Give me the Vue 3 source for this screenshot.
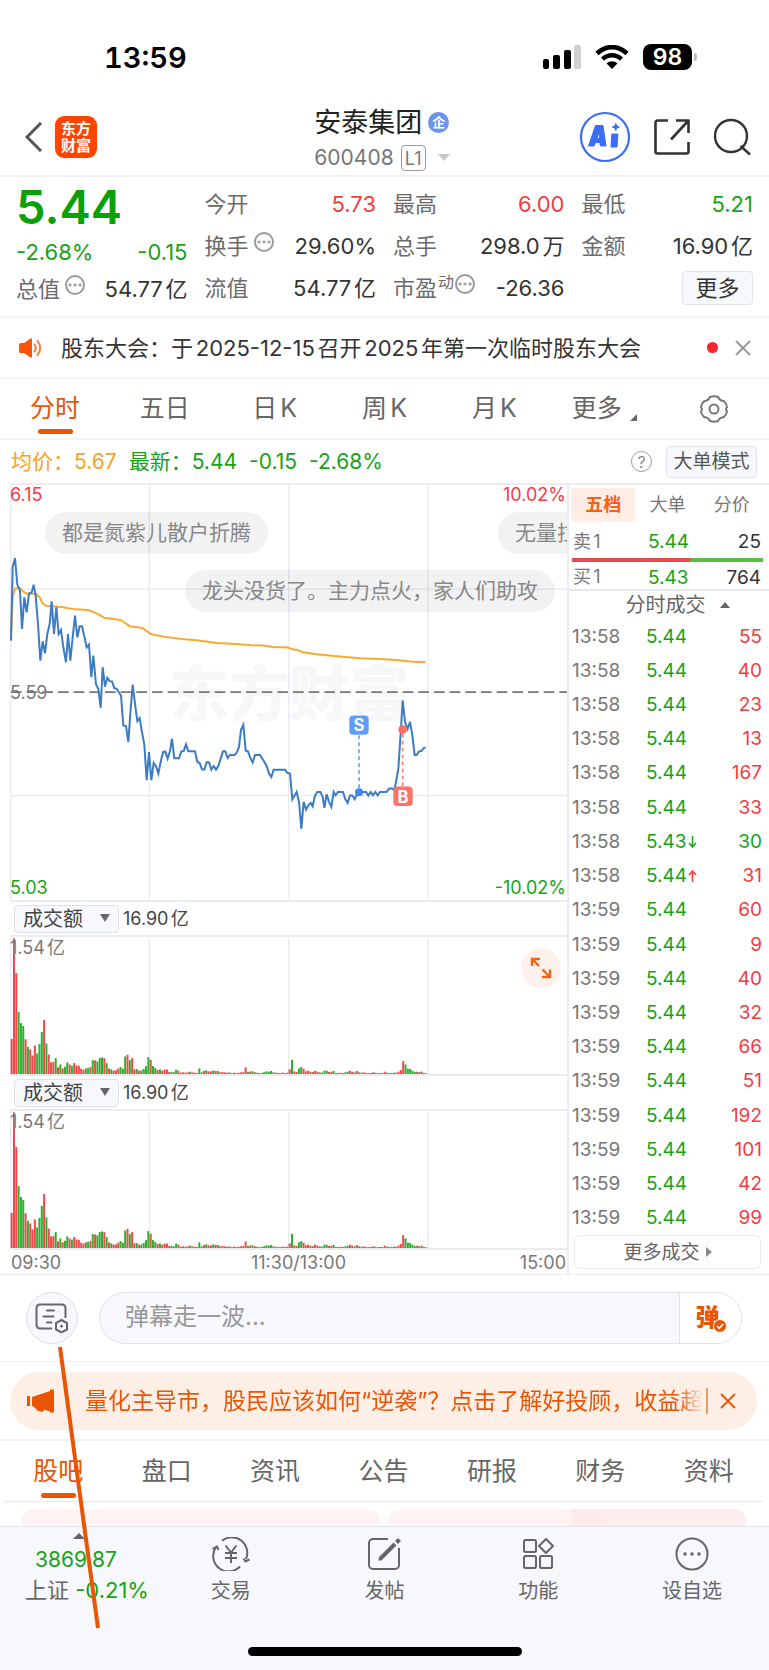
<script setup>
import { ref } from 'vue'

const period = ref('分时')
const periods = ['分时', '五日', '日K', '周K', '月K', '更多']
const depth = ref('五档')
const depths = ['五档', '大单', '分价']
const section = ref('股吧')
const sections = ['股吧', '盘口', '资讯', '公告', '研报', '财务', '资料']

const trades = [
  ['13:58', '5.44', '', 55],
  ['13:58', '5.44', '', 40],
  ['13:58', '5.44', '', 23],
  ['13:58', '5.44', '', 13],
  ['13:58', '5.44', '', 167],
  ['13:58', '5.44', '', 33],
  ['13:58', '5.43', 'down', 30],
  ['13:58', '5.44', 'up', 31],
  ['13:59', '5.44', '', 60],
  ['13:59', '5.44', '', 9],
  ['13:59', '5.44', '', 40],
  ['13:59', '5.44', '', 32],
  ['13:59', '5.44', '', 66],
  ['13:59', '5.44', '', 51],
  ['13:59', '5.44', '', 192],
  ['13:59', '5.44', '', 101],
  ['13:59', '5.44', '', 42],
  ['13:59', '5.44', '', 99],
]

const pricePoints =
  '33,480 38,258 45,232 52,312 60,330 66,445 73,350 80,395 87,338 95,335 101,312 107,345 114,430 121,540 128,482 135,518 142,460 149,430 155,362 162,460 169,380 176,460 183,448 190,500 198,545 204,460 211,540 218,470 225,405 232,470 239,437 246,437 253,468 260,500 267,492 274,590 280,525 288,612 295,625 302,682 308,560 315,618 322,592 329,602 336,603 343,623 350,625 357,636 363,645 370,735 378,737 385,785 391,700 398,612 405,670 412,722 419,713 426,755 433,793 440,900 447,815 454,900 461,848 468,858 475,880 482,845 489,815 496,813 503,835 510,812 516,775 523,834 537,834 544,813 551,812 558,792 565,813 585,813 592,845 599,848 606,867 613,868 620,846 627,846 634,868 641,857 648,868 655,857 662,835 669,813 676,813 683,833 690,824 704,824 711,815 717,800 723,748 730,733 737,811 744,813 751,833 758,846 765,824 780,824 790,840 800,857 807,880 814,890 821,868 855,868 862,878 870,880 877,957 890,935 897,965 904,1046 911,965 918,988 925,975 932,968 938,978 945,946 952,935 961,935 968,950 973,983 980,942 987,965 994,980 1001,935 1007,945 1014,935 1029,935 1036,957 1043,968 1050,946 1057,946 1064,957 1071,942 1078,935 1098,935 1105,946 1112,935 1119,945 1126,935 1133,945 1140,935 1160,935 1167,925 1176,924 1183,930 1188,905 1195,865 1202,760 1208,660 1215,725 1223,745 1230,724 1237,765 1244,824 1250,824 1257,813 1264,812 1272,802 1277,802'
const averagePoints =
  '33,470 38,350 45,323 60,322 70,333 80,338 108,340 118,348 128,368 138,375 185,379 225,386 265,388 290,398 312,411 362,418 390,437 428,442 452,460 490,468 545,475 590,479 650,487 710,490 755,494 790,495 820,499 865,501 880,507 892,508 908,515 950,521 1010,527 1080,533 1140,535 1190,538 1230,543 1277,545'

const volume =
  'r106 r410 r305 g187 g154 g145 r105 g82 r74 r56 r86 g62 g91 g127 r163 g92 r59 r35 r36 g48 r20 g29 r17 g22 g35 r29 g25 r33 r26 r25 r16 r13 g17 g18 r21 g42 r41 g38 g48 g50 r48 g33 r17 g14 r10 r11 r16 g21 g16 g53 r58 g42 r48 r14 g15 r10 g11 g15 g24 g51 r43 g24 g18 r12 g14 r10 r13 r14 r6 g6 g5 g13 r10 r4 r5 r4 r5 g7 r5 r4 r3 g17 g5 r9 g11 r8 r8 g11 r9 g9 r5 r6 r5 r4 g5 r3 r4 r3 r4 r5 r6 r20 g6 r8 g8 r5 g4 r3 r3 g6 g8 g7 g9 g5 r4 r3 r3 r4 r3 r4 r14 g43 r8 r6 g17 g21 r16 r8 r10 g7 r6 r10 r7 g5 g4 g10 g10 r6 r7 g9 r3 r3 r4 r3 g5 g7 r10 r7 g5 r9 g5 r4 r5 g3 r3 g3 r5 g4 r3 g3 r3 r7 g4 r3 r3 g4 r4 r7 r12 r39 g29 g16 g15 g10 g6 r7 g6 r7 r3 r2'
const bars = volume.split(' ').map((token, i) => {
  const h = Number(token.slice(1))
  return { x: 32 + i * 6.95, y: 521 - h, h, rise: token[0] === 'r' }
})
const panes = ['first', 'second']
</script>

<template>
  <div class="page">
    <div class="status">
      <span class="clock">13:59</span>
      <div class="signals">
        <svg class="cell" viewBox="0 0 38 24" aria-hidden="true">
          <rect x="0" y="14" width="6" height="10" rx="2" />
          <rect x="10" y="10" width="7" height="14" rx="2" />
          <rect x="21" y="5" width="7" height="19" rx="2" />
          <rect x="31" y="0" width="7" height="24" rx="2" fill="#cfcfcf" />
        </svg>
        <svg class="wifi" viewBox="0 0 34 24" aria-hidden="true">
          <path d="M2 8.500C10.500 0 23.500 0 32 8.500" fill="none" stroke="#000" stroke-width="4.600" />
          <path d="M7.500 14.200C13 9 21 9 26.500 14.200" fill="none" stroke="#000" stroke-width="4.400" />
          <path d="M17 24l-5.400-5.600c3-2.800 7.800-2.800 10.800 0z" />
        </svg>
        <span class="battery">98</span>
      </div>
    </div>

    <header class="header">
      <div class="side">
        <button class="plain back" aria-label="返回">
          <svg width="18" height="30" viewBox="0 0 18 30"><path d="M16 1L2 15l14 14" fill="none" stroke="#555" stroke-width="3" /></svg>
        </button>
        <a class="logo" href="#"><span>东方</span><span>财富</span></a>
      </div>
      <div class="title">
        <h1>安泰集团<span class="corp">企</span></h1>
        <button class="code plain">600408<span class="level">L1</span><i class="tri-down pale"></i></button>
      </div>
      <div class="side tools">
        <button class="plain" aria-label="Ai">
          <svg width="52" height="52" viewBox="0 0 52 52">
            <circle cx="26" cy="26" r="24" fill="#fff" stroke="#3a6cf8" stroke-width="2.200" />
            <path d="M9.500 35L16.500 14.500h7.500L27 35h-5.500l-.5-3.500h-4.500L15 35zM17.800 27.500h2.800l-.4-6.500z" fill="#3a6cf8" fill-rule="evenodd" stroke="#3a6cf8" stroke-width="1" stroke-linejoin="round" />
            <path d="M32.800 23h6l-.8 13h-6zM36.800 12.500l1 2.500 2.500 1-2.500 1-1 2.500-1-2.500-2.500-1 2.500-1z" fill="#3a6cf8" stroke="#3a6cf8" stroke-width="1" stroke-linejoin="round" />
          </svg>
        </button>
        <button class="plain" aria-label="分享">
          <svg width="38" height="38" viewBox="0 0 38 38" fill="none" stroke="#333" stroke-width="2.600" stroke-linejoin="round">
            <path d="M15 2.500H4.500a2 2 0 0 0-2 2v29a2 2 0 0 0 2 2h29a2 2 0 0 0 2-2V24M23 2.500h12.500V15M35.500 2.500L18 21.500" />
          </svg>
        </button>
        <button class="plain" aria-label="搜索">
          <svg width="38" height="38" viewBox="0 0 38 38" fill="none" stroke="#333" stroke-width="2.400">
            <circle cx="18" cy="18" r="16" /><path d="M27.500 28L37 36.500" />
          </svg>
        </button>
      </div>
    </header>

    <section class="quote">
      <div class="col lead">
        <strong class="last green">5.44</strong>
        <div class="row green"><span>-2.68%</span><span>-0.15</span></div>
        <div class="row"><span class="label">总值<i class="more-dot"></i></span><span>54.77亿</span></div>
      </div>
      <div class="col">
        <div class="row"><span class="label">今开</span><span class="red">5.73</span></div>
        <div class="row"><span class="label">换手<i class="more-dot"></i></span><span>29.60%</span></div>
        <div class="row"><span class="label">流值</span><span>54.77亿</span></div>
      </div>
      <div class="col">
        <div class="row"><span class="label">最高</span><span class="red">6.00</span></div>
        <div class="row"><span class="label">总手</span><span>298.0万</span></div>
        <div class="row"><span class="label">市盈<sup>动</sup><i class="more-dot tight"></i></span><span>-26.36</span></div>
      </div>
      <div class="col">
        <div class="row"><span class="label">最低</span><span class="green">5.21</span></div>
        <div class="row"><span class="label">金额</span><span>16.90亿</span></div>
        <div class="row end"><button class="box more">更多</button></div>
      </div>
    </section>

    <section class="notice">
      <svg width="24" height="20" viewBox="0 0 24 20" aria-hidden="true">
        <path d="M0 6.500Q0 5 1.500 5H5l6.500-4.600Q13 0 13 1.500v17q0 1.500-1.500 1.100L5 15H1.500Q0 15 0 13.500z" fill="#ff5406" />
        <path d="M15.500 6.500q2.500 3.500 0 7M18.500 3q5.500 7 0 14" fill="none" stroke="#ff7a3c" stroke-width="2" stroke-linecap="round" />
      </svg>
      <a class="notice-text" href="#">股东大会：于2025-12-15召开2025年第一次临时股东大会</a>
      <span class="dot"></span>
      <button class="plain" aria-label="关闭">
        <svg width="16" height="16" viewBox="0 0 16 16"><path d="M1 1l14 14M15 1L1 15" stroke="#999" stroke-width="2" /></svg>
      </button>
    </section>

    <nav class="tabs periods">
      <button v-for="p in periods" :key="p" class="tab" :class="{ active: p === period }" @click="period = p">
        {{ p }}<i v-if="p === '更多'" class="corner"></i>
      </button>
      <button class="tab" aria-label="设置">
        <svg width="28" height="28" viewBox="0 0 28 28" fill="none" stroke="#777" stroke-width="2">
          <path d="M10 2Q14 0.500 18 2Q19.500 5.500 24 6.200Q27 9.500 27 12.500Q24.800 14 27 16Q27 19 24 22Q19.500 22.500 18 26Q14 27.500 10 26Q8.500 22.500 4 22Q1 19 1 16Q3.200 14 1 12.500Q1 9.500 4 6.200Q8.500 5.500 10 2z" stroke-linejoin="round" />
          <circle cx="14" cy="14" r="4.500" />
        </svg>
      </button>
    </nav>

    <div class="info">
      <span class="amber">均价：5.67</span>
      <span class="green latest">最新：5.44</span>
      <span class="green">-0.15</span>
      <span class="green">-2.68%</span>
      <button class="help" aria-label="帮助">?</button>
      <button class="box mode">大单模式</button>
    </div>

    <main class="board">
      <div class="charts">
        <div class="chart">
          <span class="watermark">东方财富</span>
          <svg class="plot" viewBox="30 12 1671 1248" preserveAspectRatio="none" aria-label="分时走势">
            <g stroke="#e9eaf2" stroke-width="4">
              <path d="M32 12V1260M448 12V1256M866 12V1256M1284 12V1256M32 325H1701M32 946H1701" />
            </g>
            <path d="M33 635H1701" stroke="#777" stroke-width="5" stroke-dasharray="32 15" />
            <polyline :points="averagePoints" fill="none" stroke="#fba92c" stroke-width="6" stroke-linejoin="round" />
            <polyline :points="pricePoints" fill="none" stroke="#3b7cc4" stroke-width="6" />
            <path d="M1077 765V925" stroke="#64a2fb" stroke-width="5" stroke-dasharray="11 10" />
            <path d="M1208 760V920" stroke="#fa7d6e" stroke-width="5" stroke-dasharray="11 10" />
            <circle cx="1077" cy="936" r="12" fill="#4186f5" />
            <circle cx="1208" cy="747" r="13" fill="#fa6f62" />
            <rect x="1048" y="705" width="58" height="58" rx="12" fill="#5e9dfb" />
            <rect x="1180" y="919" width="58" height="58" rx="12" fill="#fb7466" />
            <text x="1077" y="753" class="mark">S</text>
            <text x="1209" y="967" class="mark">B</text>
          </svg>
          <span class="scale top left red">6.15</span>
          <span class="scale top right red">10.02%</span>
          <span class="scale middle left">5.59</span>
          <span class="scale bottom left green">5.03</span>
          <span class="scale bottom right green">-10.02%</span>
          <span class="bubble first">都是氮紫儿散户折腾</span>
          <span class="bubble second">龙头没货了。主力点火，家人们助攻</span>
          <span class="bubble third">无量拉升</span>
        </div>
        <template v-for="pane in panes" :key="pane">
          <div class="metric">
            <label class="picker">
              <select :aria-label="'指标 ' + pane"><option>成交额</option></select>
              <i class="tri-down"></i>
            </label>
            <span>16.90亿</span>
          </div>
          <div class="chart volume">
            <svg class="plot" viewBox="30 107 1671 414" preserveAspectRatio="none" aria-label="成交额">
              <path d="M32 107V521M448 112V521M866 112V521M1284 112V521" stroke="#e9eaf2" stroke-width="4" />
              <rect
                v-for="(b, i) in bars"
                :key="i"
                :x="b.x"
                :y="b.y"
                width="6"
                :height="b.h"
                :fill="b.rise ? '#f2484b' : '#2fae2f'"
              />
            </svg>
            <span class="scale peak left">1.54亿</span>
            <button v-if="pane === 'first'" class="expand" aria-label="展开">
              <svg width="22" height="22" viewBox="0 0 22 22" fill="none" stroke="#f0641e" stroke-width="2.400">
                <path d="M2 9V2h8M2 2l7 7M20 12.500V20h-8M20 20l-7.500-7.500" />
              </svg>
            </button>
          </div>
        </template>
        <div class="axis"><span>09:30</span><span class="noon">11:30/13:00</span><span>15:00</span></div>
      </div>

      <aside class="book">
        <div class="depths">
          <button v-for="d in depths" :key="d" :class="{ active: d === depth }" @click="depth = d">{{ d }}</button>
        </div>
        <div class="level-row"><span>卖1</span><b class="green">5.44</b><em>25</em></div>
        <div class="ratio"></div>
        <div class="level-row buy"><span>买1</span><b class="green">5.43</b><em>764</em></div>
        <h2>分时成交<i class="tri-up"></i></h2>
        <table class="trades">
          <tbody>
            <tr v-for="(t, i) in trades" :key="i">
              <td class="time">{{ t[0] }}</td>
              <td class="green">
                {{ t[1] }}<svg v-if="t[2]" :class="t[2]" width="9" height="12" viewBox="0 0 9 12" fill="none" stroke="currentColor" stroke-width="1.500"><path d="M4.500 0v11M1 7l3.500 4L8 7" /></svg>
              </td>
              <td class="qty" :class="t[2] === 'down' ? 'green' : 'red'">{{ t[3] }}</td>
            </tr>
          </tbody>
        </table>
        <button class="all">更多成交<i class="tri-right"></i></button>
      </aside>
    </main>

    <section class="composer">
      <button class="round" aria-label="弹幕设置">
        <svg width="34" height="30" viewBox="0 0 34 30" fill="none" stroke="#666" stroke-width="2">
          <path d="M17 25.500H5a3.500 3.500 0 0 1-3.500-3.500V5A3.500 3.500 0 0 1 5 1.500h22A3.500 3.500 0 0 1 30.500 5v10" />
          <path d="M12 7.500h7M8.500 13.500h10M12 19.500h4.500" stroke-linecap="round" />
          <path d="M26.500 17l5.500 3v6.500l-5.500 3-5.500-3V20z" /><circle cx="26.500" cy="23.200" r="1" fill="#666" stroke-width="1" />
        </svg>
      </button>
      <div class="field">
        <input type="text" placeholder="弹幕走一波..." aria-label="弹幕" />
        <button class="send" aria-label="弹幕开关">
          <span class="glyph">弹
            <svg class="check" width="14" height="14" viewBox="0 0 14 14"><circle cx="7" cy="7" r="6.500" fill="#ea5504" stroke="#fff" /><path d="M4 7l2.200 2.300L10.200 5" fill="none" stroke="#fff" stroke-width="1.600" /></svg>
          </span>
        </button>
      </div>
      <svg class="pointer" width="46" height="284" viewBox="0 0 46 284" aria-hidden="true"><path d="M3 1L41 282" stroke="#ea5504" stroke-width="4" /></svg>
    </section>

    <section class="promo">
      <div class="pill">
        <svg width="28" height="24" viewBox="0 0 28 24" aria-hidden="true">
          <path d="M0 7h3v10H0zM5 8l18-6V0.500h4v23h-4v-1L17 20.500v1l-2 1.500-5-1.500-1.500-2.500L5 17z" fill="#ea5504" />
        </svg>
        <a href="#">量化主导市，股民应该如何“逆袭”？点击了解好投顾，收益超</a>
        <button class="plain" aria-label="关闭">
          <svg width="16" height="16" viewBox="0 0 16 16"><path d="M1 1l14 14M15 1L1 15" stroke="#ea5504" stroke-width="1.800" /></svg>
        </button>
      </div>
    </section>

    <nav class="tabs sections">
      <button v-for="s in sections" :key="s" class="tab" :class="{ active: s === section }" @click="section = s">{{ s }}</button>
    </nav>
    <div class="cards"><div class="card"></div><div class="card tinted"></div></div>

    <footer class="dock">
      <div class="items">
        <button class="index">
          <i class="tri-up wide"></i>
          <span class="points green">3869.87</span>
          <span class="market">上证 <b class="green">-0.21%</b></span>
        </button>
        <button class="item">
          <svg width="38" height="34" viewBox="0 0 38 34" fill="none" stroke="#666" stroke-width="2">
            <path d="M10 3.800A15.500 15.500 0 0 1 34 22M28 29.500A15.500 15.500 0 0 1 4 10" />
            <path d="M.5 12L5 9.500l1.500 3.500M31.500 21.500L33.500 24.500l4-2M13.500 8.500l5.500 7 5.500-7M19 15.500v10.500M13 16h12M13 21h12" />
          </svg>
          交易
        </button>
        <button class="item">
          <svg width="34" height="34" viewBox="0 0 34 34" fill="none" stroke="#666" stroke-width="2">
            <path d="M21 2H6a4 4 0 0 0-4 4v22a4 4 0 0 0 4 4h22a4 4 0 0 0 4-4V11" />
            <path d="M13 22L28 7" stroke-width="4" /><path d="M12 23.500l2.500-4" stroke-width="2" /><path d="M29.500 5.500l3-3" stroke-width="4" />
          </svg>
          发帖
        </button>
        <button class="item">
          <svg width="34" height="34" viewBox="0 0 34 34" fill="none" stroke="#666" stroke-width="2" stroke-linejoin="round">
            <rect x="3" y="3" width="12" height="12" rx="1.500" /><rect x="3" y="19" width="12" height="12" rx="1.500" /><rect x="19" y="19" width="12" height="12" rx="1.500" />
            <path d="M25 2l7 7-7 7-7-7z" />
          </svg>
          功能
        </button>
        <button class="item">
          <svg width="34" height="34" viewBox="0 0 34 34" fill="none" stroke="#666" stroke-width="2">
            <circle cx="17" cy="17" r="15.500" />
            <g fill="#666" stroke="none"><circle cx="10" cy="17" r="1.800" /><circle cx="17" cy="17" r="1.800" /><circle cx="24" cy="17" r="1.800" /></g>
          </svg>
          设自选
        </button>
      </div>
      <div class="home"></div>
    </footer>
  </div>
</template>

<style>
body { background: #fff; }
</style>

<style scoped>
* { box-sizing: border-box; }
.page { font-family: Inter, "Noto Sans CJK SC", sans-serif; color: #333; background: #fff; min-height: 100vh; display: flex; flex-direction: column; text-autospace: normal; line-height: 1; overflow: hidden; }
button, input, select { font: inherit; color: inherit; background: none; border: 0; padding: 0; margin: 0; text-autospace: inherit; }
a { color: inherit; text-decoration: none; }
i, em { font-style: normal; }
b { font-weight: 400; }
svg { display: block; flex: none; }
.green { color: #16a316; }
.red { color: #f53b3f; }
.amber { color: #fba024; }
.plain { display: block; }
.box { border: 1px solid #e2e4ea; border-radius: 4px; background: #f7f8fb; }

.tri-down { width: 0; height: 0; border: 5px solid transparent; border-top: 8px solid #666; border-bottom: 0; }
.tri-down.pale { border-width: 7px 6px 0; border-top-color: #c8c8c8; }
.tri-up { width: 0; height: 0; border: 5px solid transparent; border-bottom: 6px solid #666; border-top: 0; }
.tri-up.wide { border-width: 0 6px 6px; }
.tri-right { width: 0; height: 0; border: 5px solid transparent; border-left: 6px solid #888; border-right: 0; }

.status { height: 95px; padding: 19px 70px 0 104px; display: flex; align-items: center; justify-content: space-between; color: #000; }
.clock { font-size: 29px; font-weight: 600; font-variant-numeric: tabular-nums; }
.signals { display: flex; align-items: center; gap: 14px; }
.cell { width: 38px; height: 24px; }
.wifi { width: 34px; height: 24px; }
.battery { position: relative; width: 49px; height: 26px; border-radius: 8px; background: #000; color: #fff; font-size: 23px; font-weight: 600; line-height: 26px; text-align: center; margin-right: 7px; }
.battery::after { content: ""; position: absolute; right: -5px; top: 9px; width: 3px; height: 8px; border-radius: 0 3px 3px 0; background: #bbb; }

.header { height: 82px; padding: 3px 18px 0 13px; border-bottom: 2px solid #f1f1f3; display: grid; grid-template-columns: 1fr auto 1fr; align-items: center; }
.side { display: flex; align-items: center; gap: 12px; }
.back { padding-left: 12px; }
.tools { justify-content: flex-end; gap: 22px; }
.logo { width: 42px; height: 42px; border-radius: 9px; background: #ff4500; color: #fff; font-size: 15px; line-height: 17px; font-weight: 700; display: flex; flex-direction: column; align-items: center; justify-content: center; }
.title { align-self: end; }
h1 { margin: 0; height: 35px; font-size: 27px; font-weight: 400; color: #222; display: flex; align-items: center; gap: 6px; }
.corp { width: 21px; height: 21px; border-radius: 50%; background: #6a94ee; color: #fff; font-size: 13px; line-height: 20px; font-weight: 700; text-align: center; }
.code { height: 35px; font-size: 21px; color: #777; display: flex; align-items: center; }
.level { margin: 0 12px 0 7px; width: 25px; height: 26px; border: 1px solid #999; border-radius: 4px; font-size: 18px; line-height: 25px; text-align: center; }

.quote { padding: 6px 16px 7px; border-bottom: 2px solid #f5f5f7; display: grid; grid-template-columns: repeat(4, 1fr); column-gap: 17px; font-size: 22px; }
.col { display: flex; flex-direction: column; }
.row { height: 42px; display: flex; align-items: center; justify-content: space-between; white-space: nowrap; }
.row.end { justify-content: flex-end; }
.last { height: 51px; font-size: 47px; line-height: 48px; font-weight: 600; color: #0aa00a; }
.lead .row { height: 35px; }
.lead .row + .row { height: 40px; }
.label { color: #6b6b6b; display: flex; align-items: center; }
.label sup { font-size: 16px; line-height: 16px; vertical-align: baseline; align-self: flex-start; margin-left: 1px; }
.more-dot { width: 20px; height: 20px; margin: 0 0 8px 5px; border: 2px solid #999; border-radius: 50%; background: radial-gradient(circle, #999 1px, transparent 2px) 0 0 / 5px 16px repeat-x; background-position: center; }
.more-dot.tight { margin-left: 1px; }
.more { width: 71px; height: 34px; }

.notice { height: 61px; padding: 0 18px 0 19px; border-bottom: 2px solid #f5f5f7; display: flex; align-items: center; font-size: 22px; }
.notice-text { flex: 1; margin-left: 18px; white-space: nowrap; }
.dot { width: 11px; height: 11px; border-radius: 50%; background: #f5252b; margin-right: 17px; }

.tabs { display: grid; grid-template-columns: repeat(7, 1fr); height: 61px; font-size: 25px; color: #666; }
.tab { position: relative; display: flex; align-items: center; justify-content: center; }
.tab.active { color: #ea5504; }
.tab.active::after { content: ""; position: absolute; bottom: 4px; left: 50%; margin-left: -17px; width: 35px; height: 5px; border-radius: 3px; background: #ea5504; }
.periods { border-bottom: 2px solid #f5f5f7; }
.corner { align-self: flex-end; margin: 0 0 17px 8px; border-left: 7px solid transparent; border-bottom: 7px solid #666; }
.sections { border-bottom: 1px solid #e8e8ec; margin: 0 6px 0 4px; }
.sections .tab.active::after { bottom: 3px; }

.info { height: 43px; padding: 0 12px 0 11px; display: flex; align-items: center; font-size: 21px; gap: 12px; white-space: nowrap; }
.help { margin-left: auto; margin-right: 2px; width: 21px; height: 21px; border: 1px solid #999; border-radius: 50%; font-size: 16px; color: #888; }
.mode { width: 91px; height: 32px; font-size: 19px; color: #555; }

.board { display: grid; grid-template-columns: minmax(0, 1fr) 202px; border-bottom: 1px solid #ebebef; }
.charts { margin-left: 10px; border-top: 2px solid #ededf1; }
.chart { position: relative; height: 417px; overflow: hidden; border-bottom: 2px solid #ebebf0; }
.plot { position: relative; width: 100%; height: 100%; }
.chart.volume { height: 141px; border-top: 2px solid #ebebf0; }
.mark { font: 700 50px Inter, sans-serif; fill: #fff; text-anchor: middle; }
.watermark { position: absolute; left: 159px; top: 174px; font-size: 60px; line-height: 70px; font-weight: 900; color: #f7f7f8; }
.scale { position: absolute; font-size: 18px; line-height: 20px; }
.left { left: 0; }
.right { right: 1px; }
.top { top: 0; }
.middle { top: 198px; color: #777; }
.bottom { bottom: 2px; }
.peak { top: 1px; color: #777; }
.bubble { position: absolute; height: 42px; padding: 0 17px; border-radius: 21px; background: rgba(0, 0, 0, 0.05); color: #888; font-size: 21px; line-height: 41px; white-space: nowrap; }
.bubble.first { left: 35px; top: 27px; }
.bubble.second { left: 175px; top: 85px; }
.bubble.third { left: 488px; top: 27px; }
.metric { height: 33px; padding-left: 4px; display: flex; align-items: center; gap: 4px; font-size: 18px; color: #444; }
.picker { position: relative; display: flex; width: 105px; height: 28px; }
.picker select { appearance: none; width: 100%; height: 100%; padding-left: 8px; border: 1px solid #dfe1e8; border-radius: 4px; background: #f7f8fb; font-size: 20px; line-height: 24px; }
.picker i { position: absolute; right: 9px; top: 9px; pointer-events: none; }
.expand { position: absolute; right: 6px; top: 11px; width: 40px; height: 40px; border-radius: 50%; background: #fdf1eb; display: flex; align-items: center; justify-content: center; }
.axis { height: 24px; padding: 2px 1px 0; display: grid; grid-template-columns: 1fr auto 1fr; align-items: center; font-size: 18px; color: #777; }
.axis .noon { padding-left: 20px; }
.axis span:last-child { text-align: right; }

.book { border-left: 2px solid #ebecf2; border-top: 2px solid #ededf1; display: flex; flex-direction: column; font-size: 19px; }
.depths { display: grid; grid-template-columns: repeat(3, 1fr); padding: 3px 5px 0 2px; }
.depths button { height: 34px; font-size: 18px; color: #777; border-radius: 4px; }
.depths .active { background: #feede5; color: #ff5d10; font-weight: 700; }
.level-row { height: 36px; padding: 3px 8px 0 4px; display: grid; grid-template-columns: 75px 1fr auto; align-items: center; }
.level-row span { color: #777; font-size: 18px; }
.level-row.buy { height: 27px; }
.ratio { height: 4px; margin: 0 6px 0 3px; background: linear-gradient(135deg, #e84a4d 0 62%, #5cba47 62%); }
h2 { margin: 0; height: 30px; border-top: 2px solid #e6e7ef; font-size: 20px; font-weight: 400; color: #666; display: flex; align-items: center; justify-content: center; gap: 14px; padding-left: 17px; }
.trades { flex: 1; border-collapse: collapse; width: 100%; table-layout: fixed; }
.trades td { padding: 0; vertical-align: middle; white-space: nowrap; }
.trades .time { width: 77px; padding-left: 3px; color: #777; }
.trades .qty { width: 62px; padding-right: 7px; text-align: right; }
.trades svg { display: inline-block; margin-left: 1px; }
.trades .up { transform: rotate(180deg); color: #f53b3f; }
.all { margin: 0 8px 5px 5px; height: 34px; border: 1px solid #ebebef; border-radius: 6px; font-size: 19px; color: #666; display: flex; align-items: center; justify-content: center; gap: 6px; }

.composer { position: relative; padding: 17px 27px 17px 26px; border-bottom: 1px solid #f1f1f4; display: flex; gap: 21px; }
.round { width: 52px; height: 52px; border: 1px solid #dcdfe5; border-radius: 50%; background: #f7f8fb; display: flex; align-items: center; justify-content: center; }
.field { flex: 1; height: 52px; border: 1px solid #e1e3e9; border-radius: 26px; background: #f7f8fb; display: flex; overflow: hidden; }
.field input { flex: 1; min-width: 0; padding: 0 25px 3px; font-size: 24px; outline: 0; }
.field input::placeholder { color: #999; opacity: 1; }
.send { width: 62px; border-left: 1px solid #e1e3e9; background: #fff; color: #ea5504; font-size: 24px; font-weight: 900; }
.glyph { position: relative; margin-right: 6px; }
.check { position: absolute; right: -7px; bottom: -1px; }
.pointer { position: absolute; left: 57px; top: 71px; z-index: 2; pointer-events: none; }

.promo { padding: 10px 12px 9px 10px; border-bottom: 2px solid #eef0f2; }
.pill { height: 58px; padding: 0 21px 0 17px; border-radius: 29px; background: #fdeee6; color: #ea5504; display: flex; align-items: center; }
.pill a { flex: 1; min-width: 0; margin-left: 30px; margin-right: 3px; font-size: 23px; line-height: 30px; overflow: hidden; white-space: nowrap; mask-image: linear-gradient(90deg, #000 96%, transparent); }
.pill .plain { border-left: 2px solid #f19a6c; padding: 5px 0 5px 12px; }
.cards { flex: none; height: 24px; padding: 7px 23px 0 21px; display: grid; grid-template-columns: 1fr 1fr; gap: 8px; }
.card { border-radius: 12px 12px 0 0; background: #fef4f3; }
.tinted { background: linear-gradient(90deg, #fef4f3 51%, #fdeaea 52%, #fdeaea 60%, #fdeeee 61%); }

.dock { flex: 1; border-top: 1px solid #e3e4e8; background: #f7f8fb; display: flex; flex-direction: column; justify-content: space-between; align-items: center; }
.items { width: 100%; display: grid; grid-template-columns: repeat(5, minmax(0, 1fr)); font-size: 20px; color: #666; }
.item { padding-top: 10px; display: flex; flex-direction: column; align-items: center; gap: 10px; line-height: 20px; }
.index { padding: 6px 0 0 25px; display: flex; flex-direction: column; align-items: flex-start; white-space: nowrap; }
.index .tri-up { margin-left: 48px; }
.points { margin: 8px 0 0 10px; font-size: 21px; line-height: 26px; }
.market { font-size: 22px; line-height: 34px; }
.home { width: 274px; height: 9px; margin-bottom: 14px; border-radius: 5px; background: #000; }
</style>
